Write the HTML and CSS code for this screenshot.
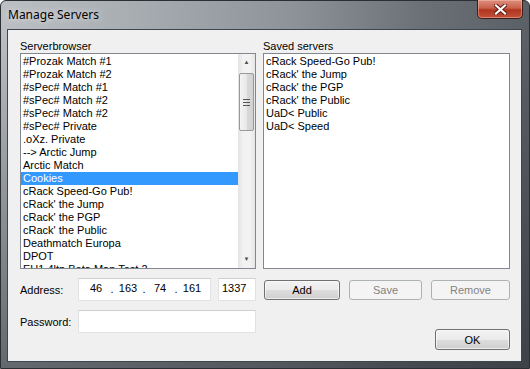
FILE: index.html
```html
<!DOCTYPE html>
<html lang="en">
<head>
  <meta charset="UTF-8" />
  <title>Manage Servers</title>
  <link rel="stylesheet" href="styles.css">
</head>
<body>
  <div class="window">
    <div class="titlebar">
      <span class="title">Manage Servers</span>
      <button class="close">
        <svg width="13" height="11" viewBox="0 0 13 11">
          <path d="M2 1.5 L11 9.5 M11 1.5 L2 9.5" stroke="#5a1a10" stroke-width="4" stroke-linecap="square" />
          <path d="M2 1.5 L11 9.5 M11 1.5 L2 9.5" stroke="#fff" stroke-width="2.2" stroke-linecap="square" />
        </svg>
      </button>
    </div>

    <div class="client">
      <!-- lists -->
      <div class="panes">
        <div class="pane">
          <div class="label">Serverbrowser</div>
          <div class="listbox">
            <div class="items">
              <div class="item">#Prozak Match #1</div>
              <div class="item">#Prozak Match #2</div>
              <div class="item">#sPec# Match #1</div>
              <div class="item">#sPec# Match #2</div>
              <div class="item">#sPec# Match #2</div>
              <div class="item">#sPec# Private</div>
              <div class="item">.oXz. Private</div>
              <div class="item">--&gt; Arctic Jump</div>
              <div class="item">Arctic Match</div>
              <div class="item selected">Cookies</div>
              <div class="item">cRack Speed-Go Pub!</div>
              <div class="item">cRack' the Jump</div>
              <div class="item">cRack' the PGP</div>
              <div class="item">cRack' the Public</div>
              <div class="item">Deathmatch Europa</div>
              <div class="item">DPOT</div>
              <div class="item">EU1 4ltp Beta Map Test 2</div>
            </div>
            <div class="scrollbar">
              <div class="arrow">&#9650;</div>
              <div class="track">
                <div class="thumb"><span class="grip"></span></div>
              </div>
              <div class="arrow">&#9660;</div>
            </div>
          </div>
        </div>

        <div class="pane">
          <div class="label">Saved servers</div>
          <div class="listbox">
            <div class="items">
              <div class="item">cRack Speed-Go Pub!</div>
              <div class="item">cRack' the Jump</div>
              <div class="item">cRack' the PGP</div>
              <div class="item">cRack' the Public</div>
              <div class="item">UaD&lt; Public</div>
              <div class="item">UaD&lt; Speed</div>
            </div>
          </div>
        </div>
      </div>

      <!-- form + buttons -->
      <div class="lower">
        <div class="form">
          <div class="field-row">
            <span class="field-label">Address:</span>
            <div class="textbox ip">
              <span class="octet">46</span><span class="dot">.</span>
              <span class="octet">163</span><span class="dot">.</span>
              <span class="octet">74</span><span class="dot">.</span>
              <span class="octet">161</span>
            </div>
            <div class="textbox port">1337</div>
          </div>
          <div class="field-row">
            <span class="field-label">Password:</span>
            <div class="textbox password"></div>
          </div>
        </div>

        <div class="actions">
          <div class="button-row">
            <button class="btn add">Add</button>
            <button class="btn save" disabled>Save</button>
            <button class="btn remove" disabled>Remove</button>
          </div>
          <div class="ok-row">
            <button class="btn ok">OK</button>
          </div>
        </div>
      </div>
    </div>
  </div>
</body>
</html>
```

FILE: styles.css
```css
body {
  margin: 0;
  background-color: #fff;
  font-family: "Liberation Sans", Arial, sans-serif;
  font-size: 11px;
  color: #000;
}
.window {
  width: 530px;
  height: 369px;
  box-sizing: border-box;
  border: 1px solid #2a2f34;
  border-radius: 6px 6px 0 0;
  display: flex;
  flex-direction: column;
  background:
    linear-gradient(to bottom, rgba(0, 0, 0, 0) 0, rgba(0, 0, 0, 0) 30px, rgba(40, 46, 52, 0.6) 100%),
    linear-gradient(to right, #bcc0c4 0%, #a8adb2 25%, #8d9399 55%, #6a7076 80%, #5a6066 100%);
}
.titlebar {
  height: 28px;
  display: flex;
  justify-content: space-between;
  align-items: flex-start;
}
.title {
  font-family: "Noto Sans", "Open Sans", sans-serif;
  font-size: 12px;
  line-height: 14px;
  margin: 7px 0 0 7px;
  text-shadow: 0 0 6px rgba(255, 255, 255, 0.8);
}
.close {
  width: 46px;
  height: 19px;
  margin: -1px 6px 0 0;
  padding: 0;
  border: 1px solid #3d1f1a;
  border-top: none;
  border-radius: 0 0 5px 5px;
  background: linear-gradient(to bottom, #dc8f80 0%, #c9604b 45%, #b0351f 55%, #c4503a 100%);
  box-shadow: inset 0 0 0 1px rgba(255, 200, 180, 0.45);
  display: flex;
  align-items: center;
  justify-content: center;
}
.client {
  flex: 1;
  margin: 0 7px 6px 6px;
  border: 1px solid #3e454c;
  background-color: #f0f0f0;
  padding: 10px 11px 0 12px;
}
.panes {
  display: grid;
  grid-template-columns: 236px 247px;
  column-gap: 7px;
}
.label {
  height: 13px;
  line-height: 13px;
}
.listbox {
  height: 216px;
  box-sizing: border-box;
  border: 1px solid #828790;
  background-color: #fff;
  display: flex;
  overflow: hidden;
}
.items {
  flex: 1;
  overflow: hidden;
}
.item {
  height: 13px;
  line-height: 13px;
  padding-left: 2px;
  white-space: nowrap;
}
.item:first-child {
  margin-top: 1px;
}
.item.selected {
  background-color: #3399ff;
  color: #fff;
}
.scrollbar {
  width: 17px;
  display: flex;
  flex-direction: column;
  background: linear-gradient(to right, #e3e3e3, #f2f2f2 30%, #f2f2f2 70%, #e6e6e6);
}
.arrow {
  height: 17px;
  font-size: 6px;
  line-height: 17px;
  text-align: center;
  color: #4d4d4d;
}
.track {
  flex: 1;
  padding-top: 2px;
}
.thumb {
  width: 13px;
  height: 56px;
  margin-left: 1px;
  border: 1px solid #999;
  border-radius: 2px;
  background: linear-gradient(to right, #f4f4f4, #e8e8e8 50%, #d9d9d9 51%, #d2d2d2);
  display: flex;
  align-items: center;
  justify-content: center;
}
.grip {
  width: 7px;
  height: 7px;
  background: linear-gradient(to bottom, #555 0, #555 1px, transparent 1px, transparent 3px, #555 3px, #555 4px, transparent 4px, transparent 6px, #555 6px, #555 7px);
}
.lower {
  display: grid;
  grid-template-columns: 236px 247px;
  column-gap: 7px;
  margin-top: 9px;
}
.field-row {
  display: flex;
  align-items: center;
  height: 23px;
  margin-bottom: 9px;
}
.field-label {
  width: 58px;
}
.textbox {
  height: 23px;
  box-sizing: border-box;
  border: 1px solid #e0e2e4;
  border-top-color: #cdd0d3;
  background-color: #fff;
  line-height: 18px;
}
.ip {
  width: 133px;
  padding-left: 3px;
  display: flex;
}
.octet {
  width: 28px;
  text-align: center;
}
.dot {
  width: 4px;
  padding-top: 1px;
  text-align: center;
}
.port {
  width: 38px;
  margin-left: 7px;
  padding-left: 3px;
}
.password {
  width: 178px;
}
.button-row {
  display: flex;
  justify-content: space-between;
  margin-top: 2px;
}
.btn {
  height: 20px;
  padding: 0;
  font-family: "Liberation Sans", Arial, sans-serif;
  font-size: 11px;
  font-weight: normal;
  color: #000;
  border: 1px solid #707070;
  border-radius: 3px;
  background: linear-gradient(to bottom, #f2f2f2 0%, #ebebeb 50%, #dddddd 51%, #cfcfcf 100%);
  box-shadow: inset 0 0 0 1px rgba(255, 255, 255, 0.6);
}
.btn:disabled {
  color: #838383;
  border-color: #adb2b5;
  background: #f4f4f4;
  box-shadow: none;
}
.add {
  width: 76px;
  margin-left: 1px;
}
.save {
  width: 73px;
}
.remove {
  width: 79px;
}
.ok-row {
  display: flex;
  justify-content: flex-end;
  margin-top: 29px;
}
.ok {
  width: 75px;
  height: 21px;
}
```
